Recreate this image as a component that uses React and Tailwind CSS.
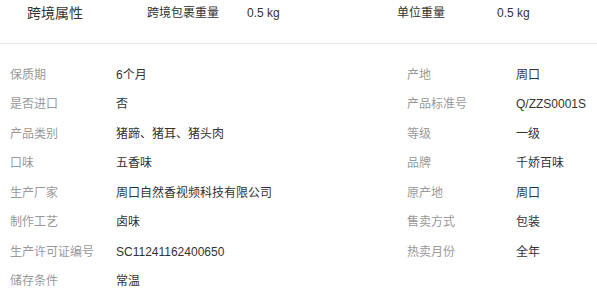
const ROWS = [
  ['保质期', '6个月', '产地', '周口'],
  ['是否进口', '否', '产品标准号', 'Q/ZZS0001S'],
  ['产品类别', '猪蹄、猪耳、猪头肉', '等级', '一级'],
  ['口味', '五香味', '品牌', '千娇百味'],
  ['生产厂家', '周口自然香视频科技有限公司', '原产地', '周口'],
  ['制作工艺', '卤味', '售卖方式', '包装'],
  ['生产许可证编号', 'SC11241162400650', '热卖月份', '全年'],
  ['储存条件', '常温', null, null],
];

export default function App() {
  return (
    <div
      className="w-[597px] h-[298px] bg-white overflow-hidden"
      style={{ fontFamily: '"Liberation Sans", "Noto Sans CJK SC", sans-serif' }}
    >
      {/* cross-border attributes */}
      <div className="h-[44px] border-b border-[#e8e8e8] flex items-start pt-[3px] text-[#333]">
        <div className="w-[147px] pl-[27px] text-[14px] leading-[20px]">跨境属性</div>
        <div className="w-[100px] text-[12px] leading-[20px]">跨境包裹重量</div>
        <div className="w-[150px] text-[12px] leading-[20px]">0.5 kg</div>
        <div className="w-[100px] text-[12px] leading-[20px]">单位重量</div>
        <div className="text-[12px] leading-[20px]">0.5 kg</div>
      </div>

      {/* basic attributes */}
      <div className="pt-[16px] pl-[10px]">
        {ROWS.map(([l1, v1, l2, v2]) => (
          <div key={l1} className="flex items-center h-[29.5px] text-[12px]">
            <div className="w-[106px] text-[#999]">{l1}</div>
            <div className="w-[291px] text-[#333]">{v1}</div>
            <div className="w-[109px] text-[#999]">{l2}</div>
            <div className="text-[#333]">{v2}</div>
          </div>
        ))}
      </div>
    </div>
  );
}
